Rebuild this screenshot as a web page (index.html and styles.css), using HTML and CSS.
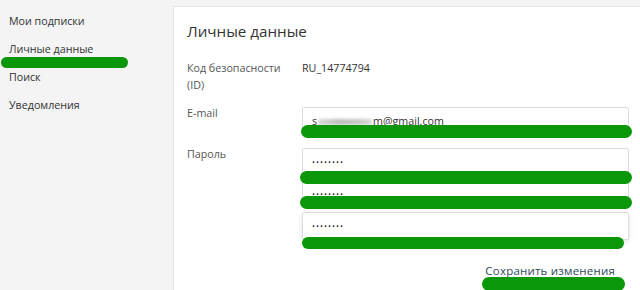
FILE: index.html
```html
<!DOCTYPE html>
<html>
  <head>
    <meta charset="utf-8">
    <title>Личные данные</title>
    <link rel="stylesheet" href="styles.css">
  </head>
  <body>
    <div class="layout">
      <ul class="side-nav">
        <li>Мои подписки</li>
        <li>Личные данные</li>
        <li>Поиск</li>
        <li>Уведомления</li>
      </ul>

      <div class="panel">
        <h1 class="panel-title">Личные данные</h1>

        <div class="form-row">
          <div class="form-label">Код безопасности<br>(ID)</div>
          <div class="form-value">RU_14774794</div>
        </div>

        <div class="form-row">
          <div class="form-label">E-mail</div>
          <div class="form-controls">
            <div class="field">s<span class="blurred"></span>m@gmail.com</div>
          </div>
        </div>

        <div class="form-row">
          <div class="form-label">Пароль</div>
          <div class="form-controls">
            <div class="field field-dots">••••••••</div>
            <div class="field field-dots">••••••••</div>
            <div class="field field-dots field-focus">••••••••</div>
          </div>
        </div>

        <div class="actions">
          <a class="save-link">Сохранить изменения</a>
        </div>
      </div>
    </div>

    <!-- marker strokes drawn over the screenshot -->
    <div class="marker marker-nav"></div>
    <div class="marker marker-email"></div>
    <div class="marker marker-pass1"></div>
    <div class="marker marker-pass2"></div>
    <div class="marker marker-pass3"></div>
    <div class="marker marker-save"></div>
  </body>
</html>
```

FILE: styles.css
```css
body {
  background: #f4f4f4;
  color: #333;
  font-family: "Open Sans", "Liberation Sans", sans-serif;
  margin: 0;
  overflow: hidden;
}

.layout {
  display: flex;
  height: 290px;
}

.side-nav {
  font-size: 10.7px;
  line-height: 17px;
  list-style: none;
  margin: 0;
  padding: 13px 0 0 9px;
  width: 164px;
}

.side-nav li {
  margin-bottom: 11px;
}

.panel {
  background: #fff;
  border-left: 1px solid #e4e4e4;
  border-top: 1px solid #e4e4e4;
  flex: 1;
  margin-top: 6px;
  padding: 12px 11px 0 13px;
}

.panel-title {
  font-size: 15.2px;
  font-weight: normal;
  line-height: 24px;
  margin: 0 0 17px 0;
}

.form-row {
  display: grid;
  grid-template-columns: 115px 1fr;
  margin-bottom: 11px;
}

.form-label {
  color: #555;
  font-size: 10.7px;
  line-height: 17px;
}

.form-value {
  font-size: 10.7px;
  line-height: 17px;
}

.form-controls {
  display: flex;
  flex-direction: column;
  gap: 4px;
  padding-top: 2px;
}

.field {
  border: 1px solid #dcdcdc;
  border-radius: 2px;
  box-sizing: border-box;
  font-size: 10.7px;
  height: 28px;
  line-height: 26px;
  padding: 0 9px;
}

.field-dots {
  font-size: 8px;
  letter-spacing: 1px;
}

.field-focus {
  box-shadow: 0 2px 5px rgba(0, 0, 0, 0.12);
}

.blurred {
  background: linear-gradient(90deg, #d8d8d8, #bdbdbd 40%, #c8c8c8 80%, #dadada);
  display: inline-block;
  filter: blur(1.5px);
  height: 6px;
  margin: 0 1px;
  vertical-align: middle;
  width: 54px;
}

.actions {
  padding: 7px 14px 0 0;
  text-align: right;
}

.save-link {
  color: #2c4a5c;
  font-size: 11.5px;
  letter-spacing: 0.2px;
}

.marker {
  background: #0a980a;
  border-radius: 7px;
  position: absolute;
}

.marker-nav { left: 1px; top: 57px; width: 127px; height: 11px; }
.marker-email { left: 301px; top: 125px; width: 331px; height: 13px; }
.marker-pass1 { left: 300px; top: 171px; width: 332px; height: 13px; }
.marker-pass2 { left: 300px; top: 196px; width: 332px; height: 13px; }
.marker-pass3 { left: 302px; top: 237px; width: 322px; height: 12px; }
.marker-save { left: 482px; top: 277px; width: 143px; height: 14px; }
```
